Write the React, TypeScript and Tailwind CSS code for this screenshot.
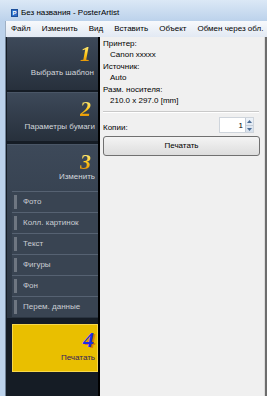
const menu = ["Файл", "Изменить", "Вид", "Вставить", "Объект", "Обмен через обл."]

const tools = ["Фото", "Колл. картинок", "Текст", "Фигуры", "Фон", "Перем. данные"]

const info = [
  { label: "Принтер:", value: "Canon xxxxx" },
  { label: "Источник:", value: "Auto" },
  { label: "Разм. носителя:", value: "210.0 x 297.0 [mm]" },
]

function Digit({ n }: { n: string }) {
  return (
    <span className="self-end mr-[7px] font-['Liberation_Serif',serif] italic font-bold text-[22px] leading-[18px] bg-gradient-to-b from-[#fff07a] via-[#ffc91a] to-[#e08a00] bg-clip-text text-transparent">
      {n}
    </span>
  )
}

export default function App() {
  return (
    <div className="w-[267px] h-[396px] overflow-hidden flex flex-col bg-[#bcd2eb] font-['Liberation_Sans',Arial,sans-serif] text-[8px] text-black">
      {/* Title bar */}
      <div className="h-[21px] shrink-0 flex items-center pl-[11px] pt-[5px] bg-gradient-to-b from-[#dbe8f6] to-[#bcd2eb]">
        <div className="w-[7px] h-[8px] bg-[#2f6fc9] border border-[#1c4f9a] flex items-center justify-center text-white text-[6px] font-bold leading-none">
          P
        </div>
        <span className="ml-[3px] leading-none">Без названия - PosterArtist</span>
      </div>

      <div className="flex-1 flex flex-col pl-[5px] min-h-0">
        {/* Menu bar */}
        <div className="h-[16px] shrink-0 flex items-center pl-[5px] gap-[11px] bg-gradient-to-b from-[#f7f9fc] to-[#e2e9f3] border-l border-[#9fb0c4]">
          {menu.map((m) => (
            <span key={m} className="leading-none whitespace-nowrap">
              {m}
            </span>
          ))}
        </div>

        <div className="flex-1 flex min-h-0">
          {/* Left wizard panel */}
          <div className="w-[95px] shrink-0 flex flex-col pl-[1px] bg-[#151c25] border-l border-[#6f8196] border-r-2 border-r-black">
            <div className="h-[53px] flex flex-col pt-[7px] bg-gradient-to-b from-[#3d4959] to-[#27303c] border-t border-[#4a5666]">
              <Digit n="1" />
              <span className="self-end mr-[4px] mt-[5px] leading-[10px] text-[#d3d7dc]">Выбрать шаблон</span>
            </div>

            <div className="h-[49px] mt-[2px] flex flex-col pt-[7px] bg-gradient-to-b from-[#3d4959] to-[#27303c] border-t border-[#4a5666]">
              <Digit n="2" />
              <span className="self-end mr-[3px] mt-[4px] leading-[10px] text-[#d3d7dc]">Параметры бумаги</span>
            </div>

            <div className="h-[174px] mt-[3px] flex flex-col pt-[8px] bg-gradient-to-b from-[#3d4959] to-[#2a3440] border-t border-[#4a5666]">
              <Digit n="3" />
              <span className="self-end mr-[3px] mt-[1px] leading-[10px] text-[#d3d7dc]">Изменить</span>
              <div className="ml-[5px] mt-[9px] flex flex-col">
                {tools.map((t) => (
                  <div
                    key={t}
                    className="h-[21px] flex items-center gap-[6px] pl-[2px] bg-[#394452] border-t border-[#566272]"
                  >
                    <div className="w-[3px] h-[14px] bg-[#6e7681]" />
                    <span className="leading-none text-[#c9cdd3]">{t}</span>
                  </div>
                ))}
              </div>
            </div>

            <div className="h-[48px] mt-[6px] ml-[5px] flex flex-col pt-[6px] bg-[#e9bf00] border border-[#f8d84a]">
              <span className="self-end mr-[3px] font-['Liberation_Serif',serif] italic font-bold text-[22px] leading-[18px] text-[#1c2ce6] [text-shadow:2px_1px_0_#e07a10]">
                4
              </span>
              <span className="self-end mr-[2px] mt-[4px] leading-[10px] text-[#33205e]">Печатать</span>
            </div>
          </div>

          {/* Right settings panel */}
          <div className="flex-1 flex flex-col bg-[#f0f0f0] pt-[1px]">
            {info.map((i) => (
              <div key={i.label} className="flex flex-col">
                <span className="pl-[3px] leading-[11.4px]">{i.label}</span>
                <span className="pl-[10px] leading-[11.4px]">{i.value}</span>
              </div>
            ))}

            <div className="mt-[5px] ml-[3px] mr-[5px] border-t border-[#c9c9c9] border-b border-b-white" />

            <div className="mt-[4px] flex items-center justify-between pl-[3px] pr-[10px]">
              <span className="leading-none mt-[6px]">Копии:</span>
              <div className="flex h-[16px] w-[35px] border border-[#cfd5dc] bg-white">
                <span className="flex-1 text-right pr-[2px] leading-[15px]">1</span>
                <div className="w-[8px] flex flex-col border-l border-[#c3cbd6] bg-gradient-to-b from-[#eef3f9] to-[#d6e0ec]">
                  <div className="flex-1 flex items-center justify-center border-b border-[#c3cbd6]">
                    <svg width="5" height="3" viewBox="0 0 5 3">
                      <path d="M0 3 L2.5 0 L5 3 Z" fill="#4a6b94" />
                    </svg>
                  </div>
                  <div className="flex-1 flex items-center justify-center">
                    <svg width="5" height="3" viewBox="0 0 5 3">
                      <path d="M0 0 L2.5 3 L5 0 Z" fill="#4a6b94" />
                    </svg>
                  </div>
                </div>
              </div>
            </div>

            <button className="mt-[3px] ml-[3px] mr-[4px] h-[20px] rounded-[3px] border border-[#707070] bg-gradient-to-b from-[#f4f4f4] to-[#dddddd] text-[8px] leading-none text-black">
              Печатать
            </button>
          </div>

          {/* Right frame edge */}
          <div className="w-[3px] shrink-0 border-l border-[#dcdcdc] bg-[#6d6d6d]" />
        </div>
      </div>
    </div>
  )
}
